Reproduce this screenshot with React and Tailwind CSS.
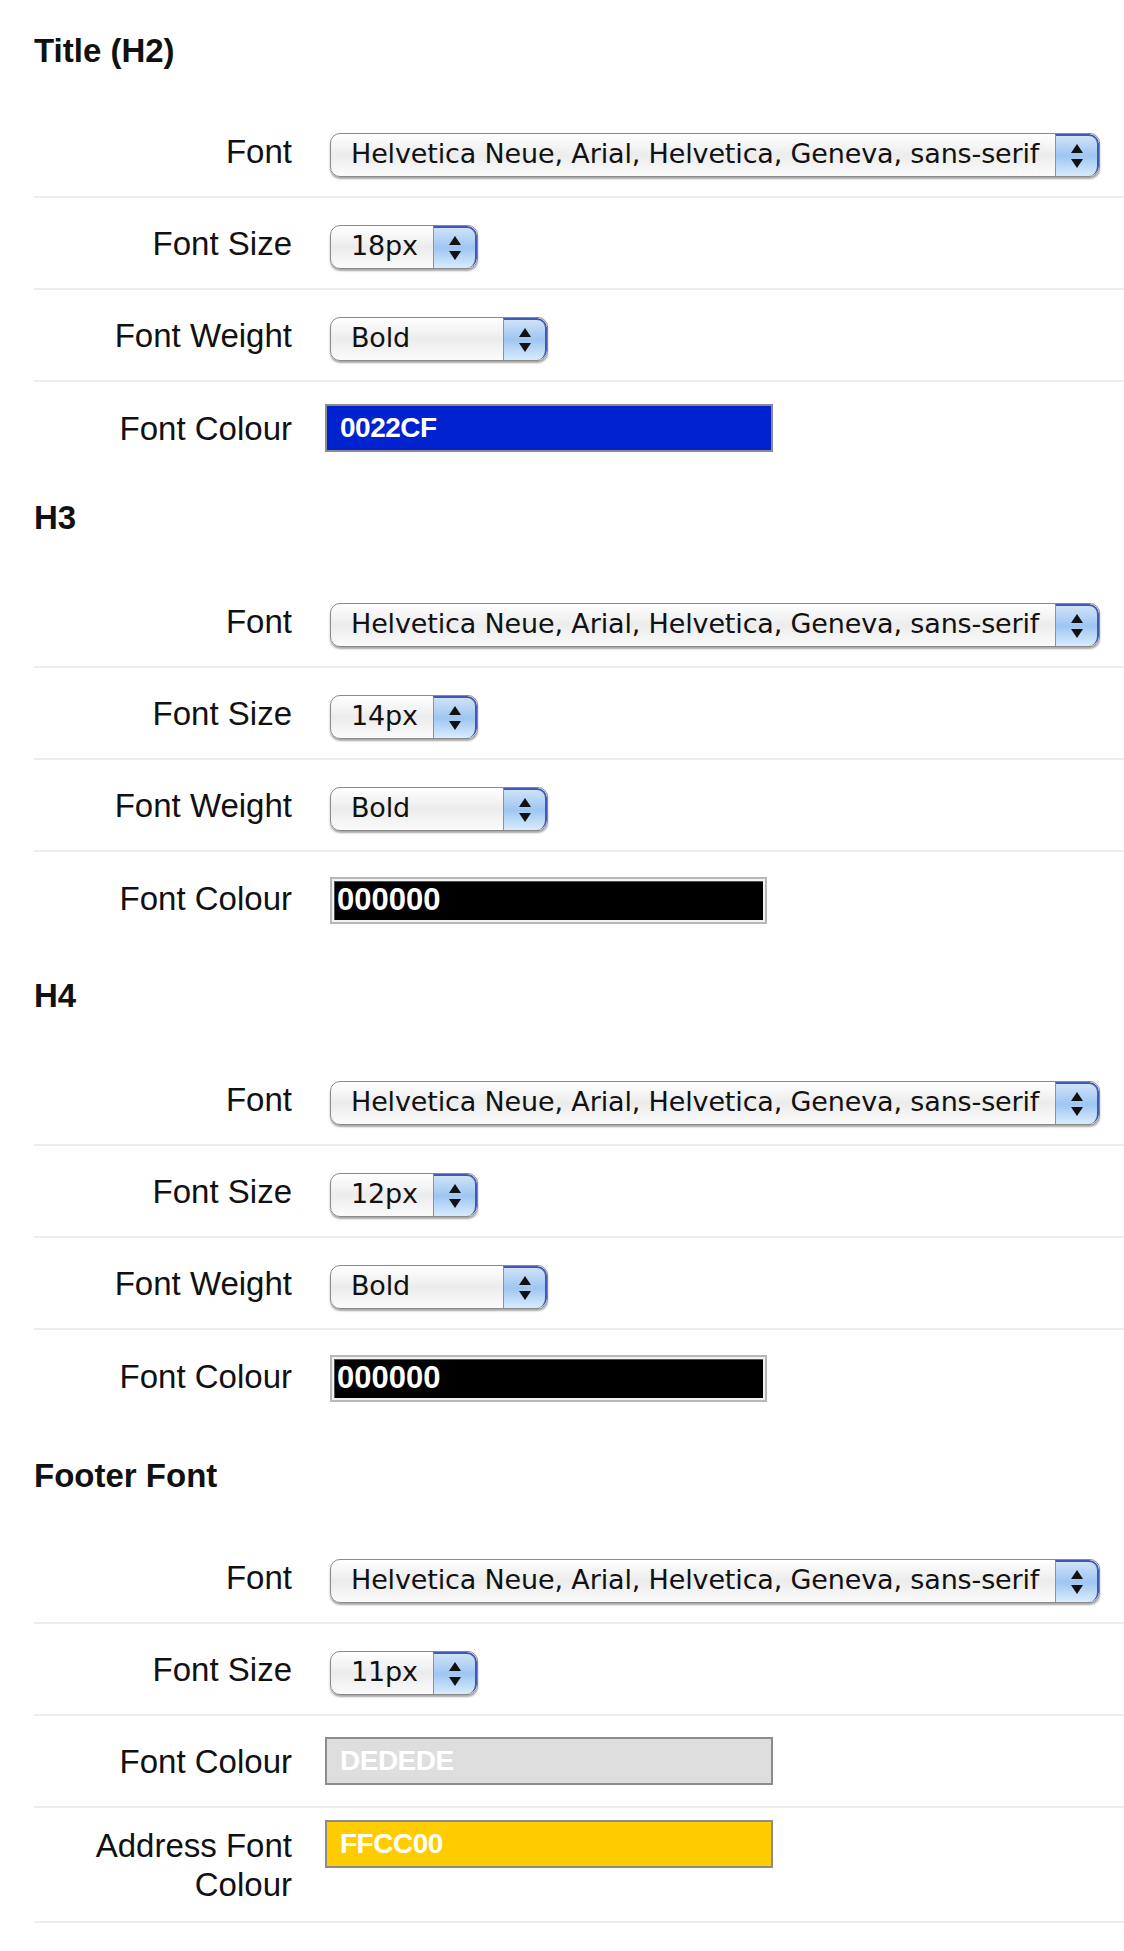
import React from "react";

const FONT_STACK = "Helvetica Neue, Arial, Helvetica, Geneva, sans-serif";

const SelectArrows = () => (
  <svg width="14" height="26" viewBox="0 0 14 26">
    <polygon points="7,1 13,10 1,10" fill="#111" />
    <polygon points="1,16 13,16 7,25" fill="#111" />
  </svg>
);

const SelectBox = ({ value, width }) => (
  <div
    className={`flex h-[44px] ${width} mt-[7px] rounded-[10px] border border-[#8a8a8a] overflow-hidden shadow-[0_2px_2px_rgba(0,0,0,0.35)] bg-linear-to-b from-white via-[#ececec] to-[#fbfbfb]`}
  >
    <div className="flex-1 flex items-center pl-[20px] text-[27px] tracking-[-0.15px] text-[#111] font-['DejaVu_Sans',sans-serif] whitespace-nowrap overflow-hidden">
      {value}
    </div>
    <div className="w-[44px] flex items-center justify-center border-l border-[#7f93bf] border-t-2 border-t-[#4257b8] border-r-2 border-r-[#4257b8] rounded-r-[10px] bg-linear-to-b from-[#cfe2f8] via-[#9ec6f1] to-[#d9ecfd]">
      <SelectArrows />
    </div>
  </div>
);

const ColourInput = ({ value, bg }) => (
  <div
    className={`ml-[-5px] w-[448px] h-[48px] border-2 border-[#8c8c8c] ${bg} flex items-center pl-[13px] text-white font-bold text-[28px] tracking-[-0.5px]`}
  >
    {value}
  </div>
);

const DarkInput = ({ value }) => (
  <div className="w-[437px] h-[47px] border-2 border-[#b8b8b8] bg-[#f2f2f2] p-[2px] mt-[4px]">
    <div className="w-full h-full bg-black border-t border-l border-[#555] flex items-center pl-[2px] text-white font-bold text-[31px]">
      {value}
    </div>
  </div>
);

const Row = ({ label, children, border = true }) => (
  <div
    className={`flex items-center h-[92px] ${border ? "border-b-2 border-[#ededed]" : ""}`}
  >
    <div className="w-[258px] text-right text-[33px] text-[#111] leading-[39px]">
      {label}
    </div>
    <div className="ml-[38px] flex items-center">{children}</div>
  </div>
);

const SectionTitle = ({ children, className }) => (
  <h2 className={`font-bold text-[33px] leading-[40px] text-[#111] ${className}`}>
    {children}
  </h2>
);

const sections = [
  { title: "Title (H2)", pad: "pt-[31px] mb-[35px]", size: "18px", colour: "0022CF", dark: false, bg: "bg-[#0022CF]" },
  { title: "H3", pad: "pt-[24px] mb-[38px]", size: "14px", colour: "000000", dark: true },
  { title: "H4", pad: "pt-[32px] mb-[38px]", size: "12px", colour: "000000", dark: true },
];

export default function App() {
  return (
    <div className="w-[1124px] min-h-[1951px] bg-white pl-[34px] font-['Liberation_Sans',Arial,sans-serif]">
      {sections.map((s) => (
        <div key={s.title}>
          <SectionTitle className={s.pad}>{s.title}</SectionTitle>
          <Row label="Font">
            <SelectBox value={FONT_STACK} width="w-[770px]" />
          </Row>
          <Row label="Font Size">
            <SelectBox value={s.size} width="w-[148px]" />
          </Row>
          <Row label="Font Weight">
            <SelectBox value="Bold" width="w-[218px]" />
          </Row>
          <Row label="Font Colour" border={false}>
            {s.dark ? (
              <DarkInput value={s.colour} />
            ) : (
              <ColourInput value={s.colour} bg={s.bg} />
            )}
          </Row>
        </div>
      ))}

      <SectionTitle className="pt-[34px] mb-[36px]">Footer Font</SectionTitle>
      <Row label="Font">
        <SelectBox value={FONT_STACK} width="w-[770px]" />
      </Row>
      <Row label="Font Size">
        <SelectBox value="11px" width="w-[148px]" />
      </Row>
      <Row label="Font Colour">
        <ColourInput value="DEDEDE" bg="bg-[#DEDEDE]" />
      </Row>
      <div className="flex items-start h-[115px] border-b-2 border-[#ededed]">
        <div className="w-[258px] pt-[18px] text-right text-[33px] text-[#111] leading-[39px]">
          Address Font
          <br />
          Colour
        </div>
        <div className="ml-[38px] pt-[12px]">
          <ColourInput value="FFCC00" bg="bg-[#FFCC00]" />
        </div>
      </div>
    </div>
  );
}
